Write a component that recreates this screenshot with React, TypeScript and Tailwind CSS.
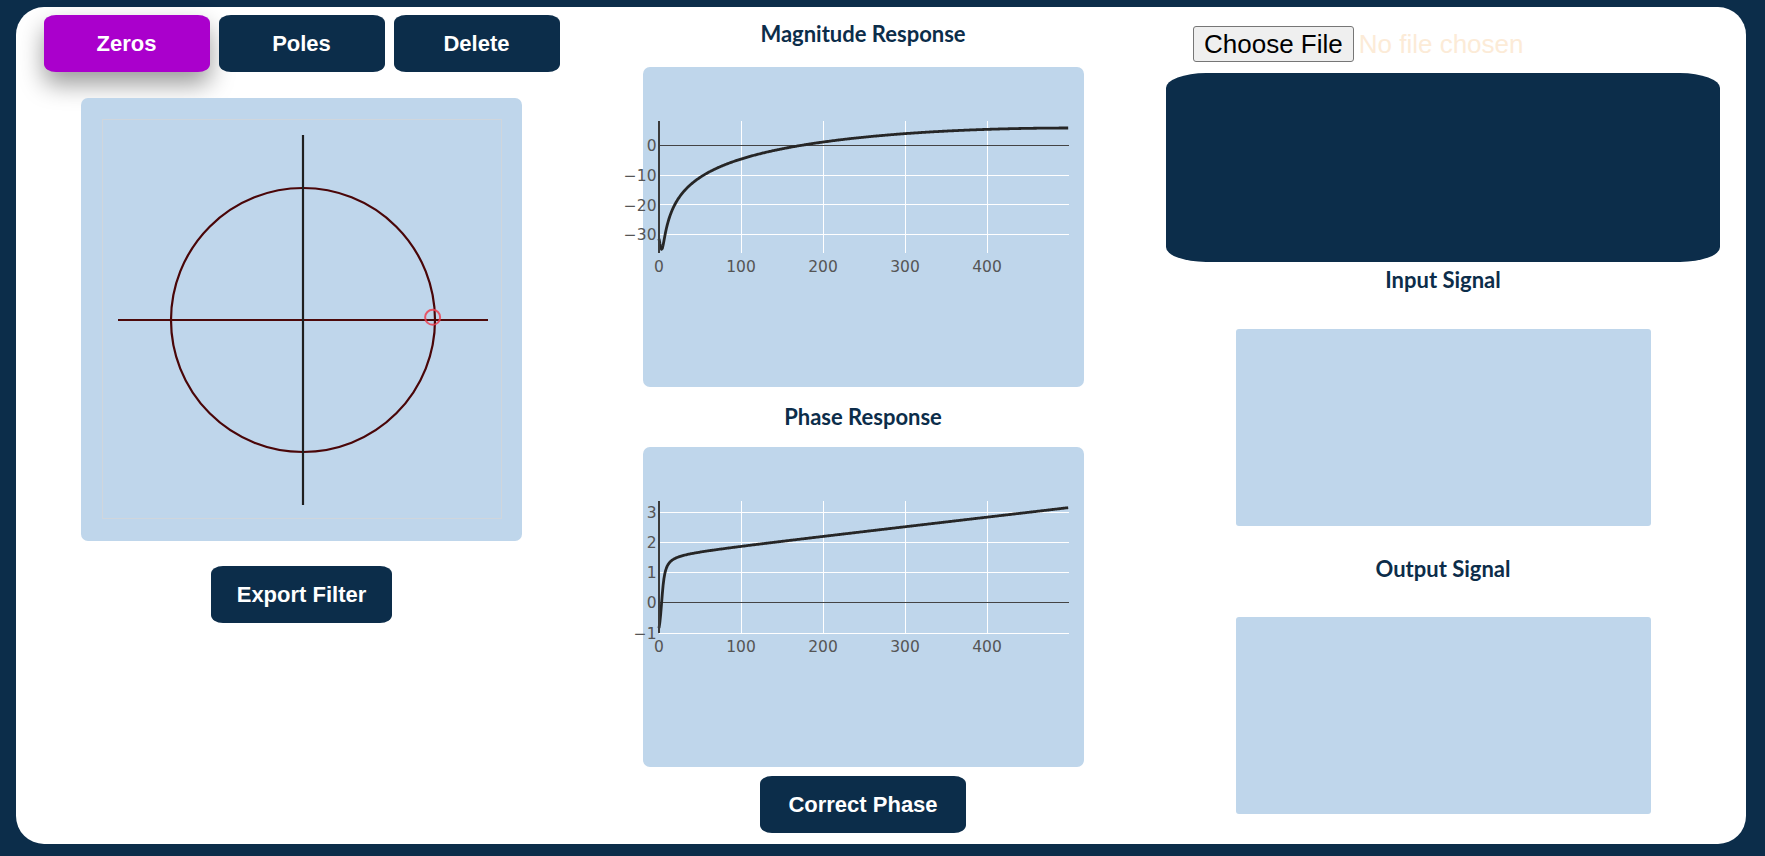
import React from 'react';

// zero placed just inside the unit circle, near z = 1
const ZERO = { re: 0.982, im: 0.02 };

type Pt = [number, number];

const buildResponse = () => {
  const mag: Pt[] = [];
  const phase: Pt[] = [];
  let prev = 0;
  for (let v = 0; v < 500; v++) {
    const w = (Math.PI * v) / 500;
    const re = Math.cos(w) - ZERO.re;
    const im = Math.sin(w) - ZERO.im;
    mag.push([v, 20 * Math.log10(Math.hypot(re, im))]);
    let p = Math.atan2(im, re);
    // unwrap
    while (p - prev < -Math.PI) p += 2 * Math.PI;
    while (p - prev > Math.PI) p -= 2 * Math.PI;
    prev = p;
    phase.push([v, p]);
  }
  return { mag, phase };
};

const { mag, phase } = buildResponse();

type ChartProps = {
  data: Pt[];
  yMin: number;
  yMax: number;
  yTicks: number[];
};

const X0 = 16;
const X1 = 426;
const Y0 = 54;
const Y1 = 186;

const ResponseChart: React.FC<ChartProps> = ({ data, yMin, yMax, yTicks }) => {
  const sx = (v: number) => X0 + (v / 500) * (X1 - X0);
  const sy = (v: number) => Y1 - ((v - yMin) / (yMax - yMin)) * (Y1 - Y0);
  const d = data
    .map(([x, y], i) => `${i === 0 ? 'M' : 'L'}${sx(x).toFixed(2)},${sy(y).toFixed(2)}`)
    .join(' ');
  const fmt = (n: number) => (n < 0 ? `\u2212${Math.abs(n)}` : `${n}`);

  return (
    <svg width={441} height={320} className="overflow-visible block">
      {[100, 200, 300, 400].map((x) => (
        <line key={x} x1={sx(x)} x2={sx(x)} y1={Y0} y2={Y1} stroke="#ffffff" strokeWidth={1} shapeRendering="crispEdges" />
      ))}
      {yTicks
        .filter((t) => t !== 0)
        .map((t) => (
          <line key={t} x1={X0} x2={X1} y1={sy(t)} y2={sy(t)} stroke="#ffffff" strokeWidth={1} shapeRendering="crispEdges" />
        ))}
      <line x1={X0} x2={X1} y1={sy(0)} y2={sy(0)} stroke="#444444" strokeWidth={1} shapeRendering="crispEdges" />
      <path d={d} fill="none" stroke="#262626" strokeWidth={2.8} strokeLinejoin="round" />
      <line x1={X0} x2={X0} y1={Y0} y2={Y1} stroke="#3a3a3a" strokeWidth={2} />
      <g fontFamily="'DejaVu Sans', Verdana, sans-serif" fontSize={15.5} fill="#555555">
        {yTicks.map((t) => (
          <text key={t} x={13.5} y={sy(t) + 5.6} textAnchor="end">
            {fmt(t)}
          </text>
        ))}
        {[0, 100, 200, 300, 400].map((x) => (
          <text key={x} x={sx(x)} y={Y1 + 19} textAnchor="middle">
            {x}
          </text>
        ))}
      </g>
    </svg>
  );
};

const PoleZeroPlot = () => (
  <svg width={398} height={398} className="block">
    <circle cx={200} cy={200} r={132} fill="none" stroke="#4a0608" strokeWidth={2.2} />
    <line x1={15} x2={385} y1={200} y2={200} stroke="#4d0a0a" strokeWidth={2.2} />
    <line x1={200} x2={200} y1={15} y2={385} stroke="#1f1f1f" strokeWidth={2.2} />
    <circle
      cx={200 + ZERO.re * 132}
      cy={200 - ZERO.im * 132}
      r={7.5}
      fill="none"
      stroke="#ec3f50"
      strokeOpacity={0.85}
      strokeWidth={2}
    />
  </svg>
);

const btn =
  "h-[57px] rounded-[12px/8px] text-white text-[22px] font-bold font-['Liberation_Sans',Arial,sans-serif] flex items-center justify-center";

const heading = "h-[40px] leading-[40px] text-[22px] font-bold font-['Lato',sans-serif] text-[#0c2d4a]";

const App = () => {
  return (
    <div className="w-[1765px] h-[856px] bg-[#0c2d4a] pt-[7px] pl-[16px] overflow-hidden">
      <div className="w-[1730px] h-[837px] bg-white rounded-[28px] pt-[8px] pl-[27px] grid grid-cols-[517px_560px_554px] gap-x-[23px] items-start">
        {/* zeros / poles editor */}
        <div className="flex flex-col items-center">
          <div className="flex gap-[9px]">
            <button className={`${btn} w-[166px] bg-[#aa00cc] shadow-[0_12px_24px_rgba(0,0,0,0.4)]`}>Zeros</button>
            <button className={`${btn} w-[166px] bg-[#0c2d4a]`}>Poles</button>
            <button className={`${btn} w-[166px] bg-[#0c2d4a]`}>Delete</button>
          </div>
          <div className="mt-[26px] w-[441px] h-[443px] bg-[#bfd6eb] rounded-[7px] pt-[21px] pl-[21px]">
            <div className="w-[400px] h-[400px] border border-[#d0d6dc]">
              <PoleZeroPlot />
            </div>
          </div>
          <button className={`${btn} mt-[25px] w-[181px] bg-[#0c2d4a]`}>Export Filter</button>
        </div>

        {/* responses */}
        <div className="flex flex-col items-center">
          <h2 className={`${heading} -mt-[1px]`}>Magnitude Response</h2>
          <div className="mt-[13px] w-[441px] h-[320px] bg-[#bfd6eb] rounded-[7px]">
            <ResponseChart data={mag} yMin={-36.2} yMax={8.3} yTicks={[0, -10, -20, -30]} />
          </div>
          <h2 className={`${heading} mt-[10px]`}>Phase Response</h2>
          <div className="mt-[10px] w-[441px] h-[320px] bg-[#bfd6eb] rounded-[7px]">
            <ResponseChart data={phase} yMin={-1} yMax={3.37} yTicks={[3, 2, 1, 0, -1]} />
          </div>
          <button className={`${btn} mt-[9px] w-[206px] bg-[#0c2d4a]`}>Correct Phase</button>
        </div>

        {/* signals */}
        <div className="flex flex-col items-center">
          <div className="self-start mt-[11px] pl-[27px] h-[36px]">
            <input
              type="file"
              className="text-[26px] leading-[30px] text-[#fcebd7] font-['Liberation_Sans',Arial,sans-serif] file:h-[36px] file:bg-[#efefef] file:border file:border-solid file:border-[#767676] file:rounded-[3px] file:px-[10px] file:mr-[5px] file:text-black"
            />
          </div>
          <div className="mt-[11px] w-[554px] h-[189px] bg-[#0c2d4a] rounded-[40px/15px]" />
          <h2 className={`${heading} -mt-[2px]`}>Input Signal</h2>
          <div className="mt-[29px] w-[415px] h-[197px] bg-[#bfd6eb] rounded-[3px]" />
          <h2 className={`${heading} mt-[23px]`}>Output Signal</h2>
          <div className="mt-[28px] w-[415px] h-[197px] bg-[#bfd6eb] rounded-[3px]" />
        </div>
      </div>
    </div>
  );
};

export default App;
